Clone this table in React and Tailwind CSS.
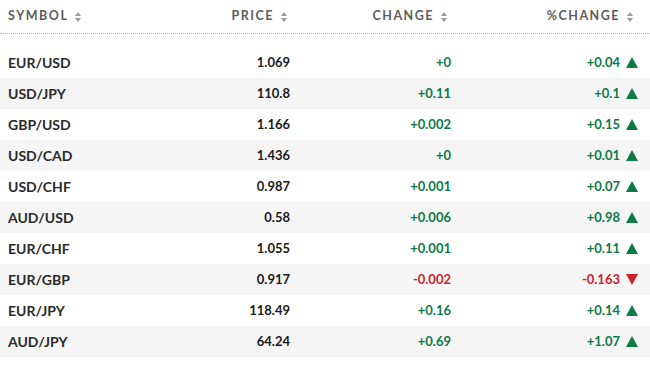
import React from "react";

const rows = [
  { symbol: "EUR/USD", price: "1.069", change: "+0", pct: "+0.04", up: true },
  { symbol: "USD/JPY", price: "110.8", change: "+0.11", pct: "+0.1", up: true },
  { symbol: "GBP/USD", price: "1.166", change: "+0.002", pct: "+0.15", up: true },
  { symbol: "USD/CAD", price: "1.436", change: "+0", pct: "+0.01", up: true },
  { symbol: "USD/CHF", price: "0.987", change: "+0.001", pct: "+0.07", up: true },
  { symbol: "AUD/USD", price: "0.58", change: "+0.006", pct: "+0.98", up: true },
  { symbol: "EUR/CHF", price: "1.055", change: "+0.001", pct: "+0.11", up: true },
  { symbol: "EUR/GBP", price: "0.917", change: "-0.002", pct: "-0.163", up: false },
  { symbol: "EUR/JPY", price: "118.49", change: "+0.16", pct: "+0.14", up: true },
  { symbol: "AUD/JPY", price: "64.24", change: "+0.69", pct: "+1.07", up: true },
];

const SortIcon = () => (
  <svg width="6" height="10" viewBox="0 0 6 10" className="ml-[7px] shrink-0">
    <path d="M3 0 L6 4 L0 4 Z" fill="#9a9a9a" />
    <path d="M3 10 L6 6 L0 6 Z" fill="#9a9a9a" />
  </svg>
);

const Arrow = ({ up }) =>
  up ? (
    <svg width="12" height="11" viewBox="0 0 12 11" className="ml-[6px] shrink-0">
      <path d="M6 0 L12 11 L0 11 Z" fill="#0b7a47" />
    </svg>
  ) : (
    <svg width="12" height="11" viewBox="0 0 12 11" className="ml-[6px] shrink-0">
      <path d="M0 0 L12 0 L6 11 Z" fill="#d0202a" />
    </svg>
  );

const HeaderCell = ({ label, className }) => (
  <div className={`flex items-center ${className}`}>
    <span>{label}</span>
    <SortIcon />
  </div>
);

export default function App() {
  return (
    <div className="w-[650px] h-[381px] bg-white font-['Lato','Liberation_Sans',sans-serif] text-[13px]">
      <div className="flex h-[34px] items-center pl-[8px] pr-[12px] border-b border-dotted border-[#b5b5b5] text-[12.5px] font-bold tracking-[1.5px] text-[#5c5c5c]">
        <HeaderCell label="SYMBOL" className="w-[160px]" />
        <HeaderCell label="PRICE" className="w-[122px] justify-end pr-[3px]" />
        <HeaderCell label="CHANGE" className="w-[161px] justify-end pr-[4px]" />
        <HeaderCell label="%CHANGE" className="w-[187px] justify-end pr-[5px]" />
      </div>
      <div className="pt-[13px]">
        {rows.map((r, i) => (
          <div
            key={r.symbol}
            className={`flex h-[31px] items-center pl-[8px] pr-[12px] font-bold ${
              i % 2 === 1 ? "bg-[#f5f5f5]" : "bg-white"
            }`}
          >
            <div className="w-[160px] text-[14px] text-[#2a2a2a]">{r.symbol}</div>
            <div className="w-[122px] text-right text-[#1a1a1a]">{r.price}</div>
            <div
              className={`w-[161px] text-right ${
                r.up ? "text-[#0b7a47]" : "text-[#d0202a]"
              }`}
            >
              {r.change}
            </div>
            <div
              className={`w-[187px] flex items-center justify-end ${
                r.up ? "text-[#0b7a47]" : "text-[#d0202a]"
              }`}
            >
              <span>{r.pct}</span>
              <Arrow up={r.up} />
            </div>
          </div>
        ))}
      </div>
    </div>
  );
}
